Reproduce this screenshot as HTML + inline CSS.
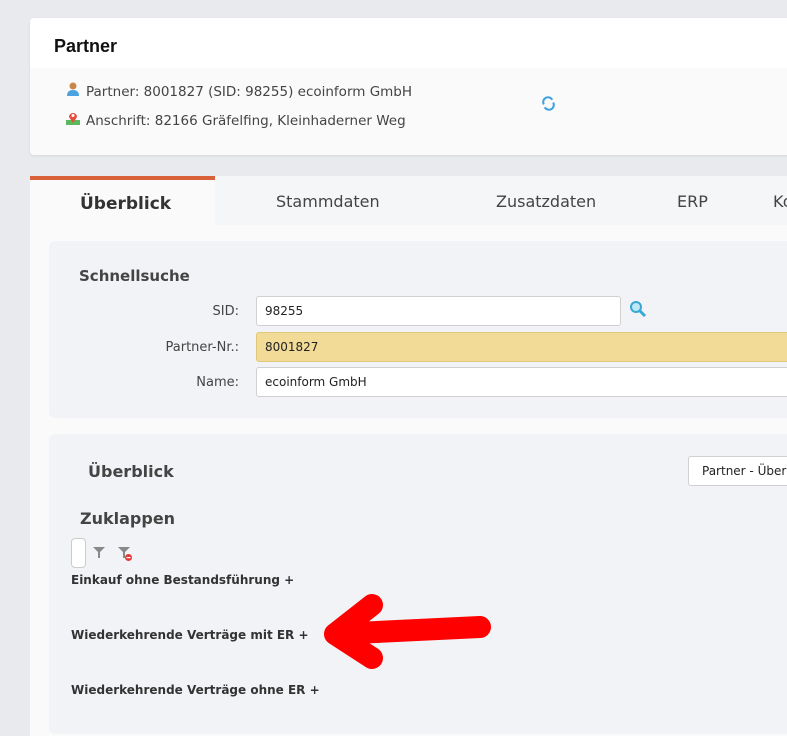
<!DOCTYPE html>
<html><head><style>
body{margin:0;width:787px;height:730px;overflow:hidden;background:#e9eaee;font-family:"DejaVu Sans","Liberation Sans",sans-serif;position:relative}
.a{position:absolute}
.card1{left:30px;top:18px;width:780px;height:137px;background:#fafafa;border-radius:4px;box-shadow:0 1px 3px rgba(0,0,0,.08)}
.hdr{left:30px;top:18px;width:780px;height:50px;background:#fff;border-radius:4px}
.t{font-size:13.5px;color:#444}
.tabs{left:30px;top:176px;width:780px;height:560px;background:#fafafa}
.tabbar{left:215px;top:176px;width:600px;height:49px;background:#f5f6f8}
.tab{font-size:16px;color:#444;top:192px}
.panel{background:#f2f3f7;border-radius:6px}
.inp{position:absolute;box-sizing:border-box;border:1px solid #d0d0d0;border-radius:3px;background:#fff;font-size:12px;padding:7px 8px;color:#222;font-family:"DejaVu Sans",sans-serif}
.lbl{font-size:13px;color:#444;text-align:right;width:120px}
.b{font-weight:bold;color:#333;font-size:12px}
</style></head><body>
<div class="a card1"></div>
<div class="a hdr"></div>
<div class="a" style="left:54px;top:36px;font:bold 18px 'Liberation Sans',sans-serif;color:#111">Partner</div>
<svg class="a" style="left:66px;top:82px" width="14" height="14"><circle cx="7" cy="4" r="3.5" fill="#c8874a"/><path d="M1 14 Q1 8 7 8 Q13 8 13 14Z" fill="#4aa3df"/></svg>
<div class="a t" style="left:86px;top:84px">Partner: 8001827 (SID: 98255) ecoinform GmbH</div>
<svg class="a" style="left:66px;top:111px" width="14" height="14"><rect x="0" y="9" width="14" height="5" fill="#5cb85c"/><path d="M7 12 L3 6 A4 4 0 1 1 11 6Z" fill="#e74c3c"/><circle cx="7" cy="4.5" r="1.5" fill="#fff"/></svg>
<div class="a t" style="left:86px;top:113px">Anschrift: 82166 Gräfelfing, Kleinhaderner Weg</div>
<svg class="a" style="left:541px;top:96px" width="15" height="15" viewBox="0 0 16 16"><path d="M3 9 A5 5 0 0 1 12 4" stroke="#3fa2e0" stroke-width="2.2" fill="none"/><path d="M13 7 A5 5 0 0 1 4 12" stroke="#3fa2e0" stroke-width="2.2" fill="none"/></svg>

<div class="a tabs"></div>
<div class="a tabbar"></div>
<div class="a" style="left:30px;top:176px;width:185px;height:4px;background:#d9623b"></div>
<div class="a tab" style="left:80px;font-weight:bold;color:#333;top:194px;font-size:17px">Überblick</div>
<div class="a tab" style="left:276px">Stammdaten</div>
<div class="a tab" style="left:496px">Zusatzdaten</div>
<div class="a tab" style="left:677px">ERP</div>
<div class="a tab" style="left:773px">Ko</div>

<div class="a panel" style="left:49px;top:241px;width:760px;height:177px"></div>
<div class="a" style="left:79px;top:267px;font-weight:bold;font-size:15px;color:#444">Schnellsuche</div>
<div class="a lbl" style="left:119px;top:304px">SID:</div>
<div class="inp" style="left:256px;top:296px;width:365px;height:30px">98255</div>
<svg class="a" style="left:629px;top:300px" width="18" height="18"><circle cx="7" cy="7" r="5" fill="#bfe8f7" stroke="#37a8d6" stroke-width="2"/><path d="M11 11 L16 16" stroke="#37a8d6" stroke-width="3"/></svg>
<div class="a lbl" style="left:119px;top:340px">Partner-Nr.:</div>
<div class="inp" style="left:256px;top:332px;width:560px;height:30px;background:#f2da97;border-color:#e0c77a">8001827</div>
<div class="a lbl" style="left:119px;top:375px">Name:</div>
<div class="inp" style="left:256px;top:367px;width:560px;height:30px">ecoinform GmbH</div>

<div class="a panel" style="left:49px;top:434px;width:760px;height:300px"></div>
<div class="a" style="left:88px;top:462px;font-weight:bold;font-size:16px;color:#444">Überblick</div>
<div class="inp" style="left:688px;top:456px;width:120px;height:30px;padding-left:13px">Partner - Über</div>
<div class="a" style="left:80px;top:509px;font-weight:bold;font-size:16px;color:#444">Zuklappen</div>
<div class="a" style="left:71px;top:538px;width:13px;height:28px;border:1px solid #ccc;border-radius:4px;background:#fff"></div>
<svg class="a" style="left:92px;top:546px" width="14" height="14"><path d="M1 1 H13 L8 6 V12 L6 12 V6Z" fill="#888"/></svg>
<svg class="a" style="left:117px;top:546px" width="16" height="16"><path d="M1 1 H13 L8 6 V12 L6 12 V6Z" fill="#888"/><circle cx="11.5" cy="11.5" r="3.5" fill="#e53935"/><rect x="9.5" y="11" width="4" height="1.2" fill="#fff"/></svg>
<div class="a b" style="left:71px;top:573px">Einkauf ohne Bestandsführung +</div>
<div class="a b" style="left:71px;top:628px">Wiederkehrende Verträge mit ER +</div>
<div class="a b" style="left:71px;top:683px">Wiederkehrende Verträge ohne ER +</div>
<svg class="a" style="left:300px;top:590px" width="200" height="90"><path d="M180 37 L35 44 M72 15 L35 44 L72 68" stroke="#ff0000" stroke-width="22" stroke-linecap="round" stroke-linejoin="round" fill="none"/></svg>
</body></html>
